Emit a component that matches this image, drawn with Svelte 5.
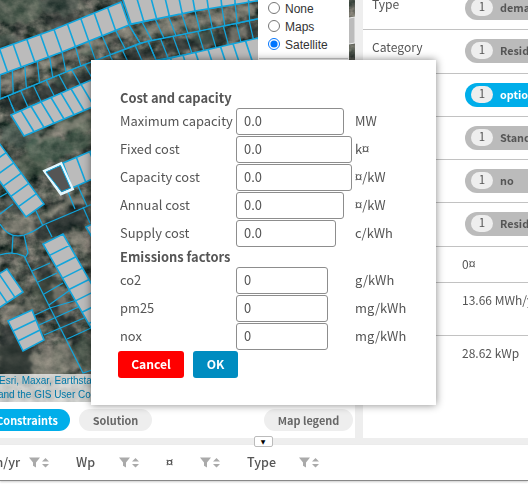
<script>
  const costs = [
    { label: 'Maximum capacity', value: '0.0', unit: 'MW', size: 'm' },
    { label: 'Fixed cost', value: '0.0', unit: 'k¤', size: 'l' },
    { label: 'Capacity cost', value: '0.0', unit: '¤/kW', size: 'l' },
    { label: 'Annual cost', value: '0.0', unit: '¤/kW', size: 'm' },
    { label: 'Supply cost', value: '0.0', unit: 'c/kWh', size: 's' }
  ];
  const emissions = [
    { label: 'co2', value: '0', unit: 'g/kWh', size: 'xs' },
    { label: 'pm25', value: '0', unit: 'mg/kWh', size: 'xs' },
    { label: 'nox', value: '0', unit: 'mg/kWh', size: 'xs' }
  ];
  const tags = [
    { name: 'Type', tag: 'demand' },
    { name: 'Category', tag: 'Residential' },
    { name: '', tag: 'optional', active: true },
    { name: '', tag: 'Standard' },
    { name: '', tag: 'no' },
    { name: '', tag: 'Residential' }
  ];
  const columns = [
    { title: 'MWh/yr', cls: 'c1' },
    { title: 'Wp', cls: 'c2' },
    { title: '¤', cls: 'c3' },
    { title: 'Type', cls: 'c4' }
  ];

  // Point at fraction t of a polyline whose vertices are evenly weighted.
  function at(line, t) {
    const p = Math.min(t * (line.length - 1), line.length - 1.0001);
    const i = Math.floor(p);
    const f = p - i;
    return [line[i][0] + (line[i + 1][0] - line[i][0]) * f, line[i][1] + (line[i + 1][1] - line[i][1]) * f];
  }
  function terrace(a, b, n) {
    const outline = 'M' + a.map((p) => p.join(' ')).join('L') + 'L' + [...b].reverse().map((p) => p.join(' ')).join('L') + 'Z';
    let walls = '';
    for (let i = 1; i < n; i++) walls += 'M' + at(a, i / n).join(' ') + 'L' + at(b, i / n).join(' ');
    return outline + walls;
  }
  const houses = [
    terrace([[-14, 54], [54, 29.5], [121, 2]], [[-6, 77], [62, 52], [129, 25]], 10),
    terrace([[122, -3], [190, -17], [262, -30]], [[131, 24], [195, 11], [262, 0]], 10),
    terrace([[11, 115], [91, 80]], [[24, 136], [104, 102]], 8),
    terrace([[158, 61], [258, 38]], [[166, 85], [266, 62]], 8),
    terrace([[-9, 132], [44, 204]], [[-27, 145], [26, 217]], 7),
    terrace([[63, 163], [103, 146]], [[72, 188], [113, 170]], 3),
    terrace([[43, 244], [95, 335]], [[63, 234], [115, 325]], 8),
    terrace([[7, 269], [-17, 284]], [[23, 292], [-1, 308]], 3),
    terrace([[8, 321], [23, 351]], [[32, 310], [44, 340]], 3),
    terrace([[86, 227], [96, 244]], [[100, 220], [110, 237]], 1)
  ];
  const plots = [
    terrace([[0, 75], [62, 52], [129, 25]], [[0, 99], [66, 72], [140, 43]], 10),
    terrace([[129, 25], [195, 11], [262, 0]], [[140, 43], [200, 31], [262, 18]], 10),
    terrace([[8, 96], [78, 67], [148, 41]], [[15, 113], [87, 82], [156, 60]], 11),
    terrace([[148, 41], [204, 30], [262, 18]], [[156, 60], [210, 50], [266, 37]], 9)
  ];
  const yards =
    'M0 224Q9 239 24 235Q34 232 43 225L95 203M36 211L43 226M46 225L52 237M68 192L75 209M78 186L87 206M83 207L90 223M13 235L12 253M24 235L28 253L25 258M0 255Q12 251 24 256L83 373L95 369M0 197L7 193M0 214L13 204M32 271L50 263M38 282L57 273M44 294L63 283M49 305L70 290M35 315L50 308L77 300M39 325L83 305M44 335L84 318M67 339L91 328M0 99L8 96M11 104L15 112';
  const shrubs = [
    [15, 7, 30, 17, '#4d6152'], [60, 4, 20, 11, '#35453f'], [67, 25, 21, 10, '#2c302f'], [6, 43, 12, 9, '#3d5047'],
    [146, 30, 10, 6, '#5c7063'], [205, 36, 13, 9, '#496054'], [90, 51, 9, 5, '#607466'], [61, 78, 9, 7, '#496256'],
    [22, 135, 20, 12, '#496257'], [49, 149, 23, 13, '#3d5d4c'], [76, 121, 20, 12, '#526653'], [32, 166, 16, 11, '#4c604e'],
    [79, 141, 14, 9, '#4c6654'], [15, 204, 12, 10, '#3f4a45'], [12, 293, 13, 12, '#3d483c'], [46, 291, 12, 16, '#4b5548'],
    [15, 362, 20, 18, '#303933'], [87, 354, 14, 17, '#48594c']
  ];
  const paved = [
    'M0 81L61 55L130 26L139 31L92 49L39 71L0 89Z', 'M139 26L256 4V15L144 37Z', 'M32 139L91 111V119L38 145Z',
    'M35 216L91 187V195L38 222Z', 'M0 219L28 218L38 229L20 235L3 230Z', 'M50 285L58 283L72 314L63 318Z',
    'M29 357L68 340L81 367L33 381Z', 'M0 312L30 300L34 308L5 322Z', 'M228 31L246 26L250 37L232 43Z', 'M70 226L87 239L89 254L72 242Z'
  ];
</script>

{#snippet field(row)}
  <label class="field">
    <span class="name">{row.label}</span>
    <span class="slot"><input class={row.size} value={row.value} /></span>
    <span>{row.unit}</span>
  </label>
{/snippet}

<div class="app">
  <div class="upper">
    <main class="left">
      <div class="map">
        <svg class="ground" viewBox="0 0 355 402" width="355" height="402">
          <defs>
            <filter id="ground" x="0" y="0" width="100%" height="100%" color-interpolation-filters="sRGB">
              <feTurbulence type="fractalNoise" baseFrequency="0.075 0.09" numOctaves="4" seed="12" />
              <feColorMatrix values="0.8 0.1 0 0 -0.13  0.68 0.14 0 0 -0.07  0.64 0.1 0 0 -0.06  0 0 0 0 1" />
            </filter>
            <filter id="rough" x="-10%" y="-10%" width="120%" height="120%" color-interpolation-filters="sRGB">
              <feTurbulence type="fractalNoise" baseFrequency="0.13" numOctaves="3" seed="5" />
              <feDisplacementMap in="SourceGraphic" scale="12" xChannelSelector="R" yChannelSelector="G" />
              <feGaussianBlur stdDeviation="0.8" />
            </filter>
          </defs>
          <rect width="355" height="402" filter="url(#ground)" />
          <g filter="url(#rough)">
            <path d="M0 104L130 53L256 24V34L139 60L12 113ZM31 227L90 198V222L42 241ZM0 325L25 321L34 375L0 374ZM40 254L60 287L82 345L66 342L38 290Z" fill="#252c2c" opacity=".65" />
            {#each shrubs as [x, y, rx, ry, color]}
              <ellipse cx={x} cy={y} {rx} {ry} fill={color} opacity=".5" />
            {/each}
            {#each paved as d}<path {d} fill="#a49e90" opacity=".5" />{/each}
          </g>
          <g fill="none" stroke="#12a5dc" stroke-width="1.25">
            {#each plots as d}<path {d} />{/each}
            <path d={yards} />
          </g>
          <g fill="#bbb" stroke="#12a5dc" stroke-width="1.6">
            {#each houses as d}<path {d} />{/each}
          </g>
          <path d="M349 18L355 17V43L349 44" fill="#bbb" stroke="#eee" />
          <path d="M44.5 171L61 163.5L72.5 189L61 194Z" fill="#555" stroke="#e4f8ff" stroke-width="2.8" />
          <path d="M46 172L60.5 165.5L70.5 188L61.5 191.5Z" fill="#555" stroke="#12a5dc" />
        </svg>
        <div class="layers">
          <label><input type="radio" name="base" />None</label>
          <label><input type="radio" name="base" />Maps</label>
          <label><input type="radio" name="base" checked />Satellite</label>
          <hr />
        </div>
        <div class="credit"><div>Esri, Maxar, Earthstar Geographics</div><div class="second">and the GIS User Community</div></div>
      </div>
      <nav>
        <button class="chip active">Constraints</button>
        <button class="chip solution">Solution</button>
        <button class="chip legend">Map legend</button>
      </nav>
    </main>
    <aside>
      {#each tags as row}
        <div class="prop">
          <span class="key">{row.name}</span>
          <span class="pill" class:active={row.active}><i>1</i><b>{row.tag}</b></span>
        </div>
      {/each}
      <div class="stat cost">0¤</div>
      <div class="stat demand">13.66 MWh/yr</div>
      <div class="stat solar">28.62 kWp</div>
    </aside>
  </div>
  <div class="splitter"><button class="fold">▼</button></div>
  <footer>
    {#each columns as col}
      <div class="col {col.cls}">
        <span>{col.title}</span>
        <svg width="21" height="12" viewBox="0 0 21 12" fill="#aaa">
          <path d="M0 .5H11L7 5.5V10.5L4 8.7V5.5Z" />
          <path d="M13 4.5L16.5 1L20 4.5ZM13 7L16.5 10.5L20 7Z" />
        </svg>
      </div>
    {/each}
  </footer>
</div>

<div class="dialog">
  <h2>Cost and capacity</h2>
  {#each costs as row}{@render field(row)}{/each}
  <h2 class="emit">Emissions factors</h2>
  {#each emissions as row}{@render field(row)}{/each}
  <div class="actions"><button class="cancel">Cancel</button><button class="ok">OK</button></div>
</div>

<style>
  :global(body) { margin: 0; overflow: hidden; }
  .app, .dialog { font-family: "Noto Sans CJK SC", "Open Sans", sans-serif; font-size: 12.9px; color: #555; box-sizing: border-box; }
  .app *, .dialog * { box-sizing: border-box; }
  button, input { font: inherit; color: inherit; }
  .app { width: 528px; height: 489px; overflow: hidden; display: flex; flex-direction: column; background: #fff; }
  .upper { height: 438px; display: flex; flex: none; }
  .left { width: 355px; flex: none; display: flex; flex-direction: column; }
  .map { height: 402px; display: grid; overflow: hidden; }
  .map > * { grid-area: 1 / 1; }
  .ground { display: block; }
  .layers { z-index: 1; justify-self: end; align-self: start; margin-right: 6px; width: 91px; height: 90px; background: #fff; font: 12px/18px "Liberation Sans", Arial, sans-serif; color: #333; }
  .layers label { display: flex; align-items: center; height: 18px; padding-left: 10px; }
  .layers input { margin: 0 5px 0 0; width: 12px; height: 12px; position: relative; top: -1px; }
  .layers hr { border: 0; border-top: 1px solid #ccc; margin: 4px 1px 0; }
  .credit { z-index: 1; align-self: end; height: 28px; background: rgba(255, 255, 255, .7); font: 10px/14px "Liberation Sans", Arial, sans-serif; color: #0078a8; white-space: nowrap; }
  .credit div { margin-left: -1px; }
  .credit .second { margin-left: -2px; }
  nav { display: flex; height: 36px; padding: 7px 2px 0 0; }
  .chip { border: 0; height: 22px; border-radius: 11px; padding: 0 0 1px; background: #eee; color: #666; font-size: 10.9px; line-height: 20px; font-weight: 700; }
  .chip.active { width: 86px; margin-left: -16px; background: #00aeea; color: #fff; }
  .solution { width: 73px; margin-left: 9px; }
  .legend { width: 89px; margin-left: auto; }
  aside { flex: 1; min-width: 0; border-left: 8px solid #eee; overflow: hidden; }
  .prop { display: flex; height: 43.25px; border-bottom: 1px solid #c2c2c2; align-items: center; padding-left: 9px; white-space: nowrap; }
  .prop:first-child { margin-top: -13px; }
  .key { width: 93px; flex: none; font-size: 12.1px; line-height: 20px; margin-top: -8px; }
  .pill { width: 120px; flex: none; height: 24px; border-radius: 12px; background: #bbb; display: flex; align-items: center; padding-left: 6px; }
  .pill i { width: 22px; height: 17px; border-radius: 8.5px; background: #eee; font-style: normal; font-size: 11.5px; line-height: 15px; text-align: center; margin-top: -1px; }
  .pill b { margin-left: 7px; font-size: 10.8px; line-height: 18px; margin-top: -2px; }
  .pill.active { background: #00aeea; }
  .pill.active b { color: #fff; }
  .stat { padding-left: 99px; white-space: nowrap; font-size: 12px; line-height: 20px; border-bottom: 1px solid #c2c2c2; }
  .cost { height: 36px; padding-top: 7px; }
  .demand { height: 53px; padding-top: 7px; }
  .solar { border: 0; padding-top: 7px; }
  .splitter { height: 7px; background: #eee; flex: none; display: flex; align-items: center; justify-content: center; padding-right: 2px; }
  .fold { width: 19px; height: 11px; border: 1px solid #bbb; border-radius: 2px; background: #fff; color: #000; padding: 0; font: 6px/9px "DejaVu Sans", sans-serif; }
  footer { height: 36px; flex: none; display: flex; align-items: center; border-bottom: 1px solid #888; box-shadow: 0 1px 2px #ccc; overflow: hidden; }
  .col { display: flex; flex: none; justify-content: space-between; align-items: center; font-size: 12.5px; line-height: 20px; font-weight: 500; white-space: nowrap; }
  .col span { margin-top: -2px; }
  .c1 { width: 76px; margin-left: -26px; }
  .c2 { width: 64px; margin-left: 26px; }
  .c3 { width: 55px; margin-left: 26px; }
  .c4 { width: 73px; margin-left: 26px; }
  .dialog { position: absolute; z-index: 5; left: 91px; top: 60px; width: 345px; height: 345px; padding: 29px 27px 0 29px; background: #fff; box-shadow: 0 0 8px rgba(0, 0, 0, .48); }
  h2 { margin: 0; height: 18px; font-size: 12.9px; line-height: 18px; font-weight: 700; }
  h2.emit { height: 19px; line-height: 20px; }
  .field { display: grid; grid-template-columns: 116px 119px 1fr; height: 28px; align-items: center; line-height: 20px; white-space: nowrap; }
  .slot { display: flex; }
  .field input { height: 27px; padding: 0 7px 1px; border: 1px solid #8d8d8d; border-radius: 3px; background: #fff; line-height: 20px; }
  .l { width: 116px; }
  .m { width: 108px; }
  .s { width: 100px; }
  .xs { width: 92px; }
  .actions { display: flex; gap: 9px; margin: 1px 0 0 -2px; }
  .actions button { height: 27px; border: 0; border-radius: 3px; color: #fff; padding: 0 0 1px; font-size: 12.1px; line-height: 20px; font-weight: 700; }
  .cancel { width: 66px; background: #f00; }
  .ok { width: 45px; background: #008cc0; }
</style>
